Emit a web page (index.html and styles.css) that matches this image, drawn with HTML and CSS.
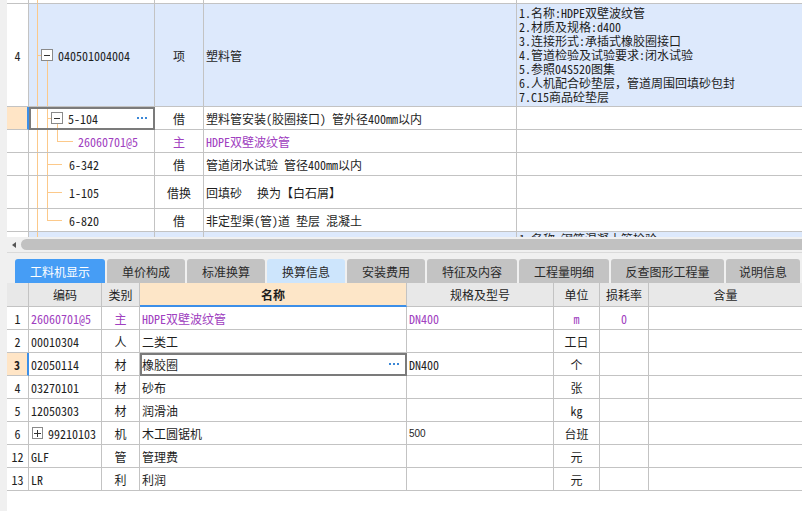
FILE: index.html
```html
<!DOCTYPE html>
<html lang="zh-CN">
<head>
<meta charset="utf-8">
<title>工料机显示</title>
<link rel="stylesheet" href="styles.css">
</head>
<body>
<div class="app">
  <div class="upper">
    <div class="trow h4">
      <div class="num"></div><div class="code tp"></div><div class="type"></div><div class="name"></div><div class="desc"></div>
    </div>
    <div class="trow h103 blue">
      <div class="num">4</div>
      <div class="code t-root"><span class="tbox minus"></span>040501004004</div>
      <div class="type">项</div>
      <div class="name">塑料管</div>
      <div class="desc multi">
        <span>1.名称:HDPE双壁波纹管</span>
        <span>2.材质及规格:d400</span>
        <span>3.连接形式:承插式橡胶圈接口</span>
        <span>4.管道检验及试验要求:闭水试验</span>
        <span>5.参照04S520图集</span>
        <span>6.人机配合砂垫层，管道周围回填砂包封</span>
        <span>7.C15商品砼垫层</span>
      </div>
    </div>
    <div class="trow h23">
      <div class="num cur"></div>
      <div class="code t-sub sel"><span class="tbox minus"></span>5-104<span class="dots"></span></div>
      <div class="type">借</div>
      <div class="name">塑料管安装(胶圈接口) 管外径400mm以内</div>
      <div class="desc"></div>
    </div>
    <div class="trow h23 main">
      <div class="num"></div>
      <div class="code t-leaf2">26060701@5</div>
      <div class="type">主</div>
      <div class="name">HDPE双壁波纹管</div>
      <div class="desc"></div>
    </div>
    <div class="trow h23">
      <div class="num"></div>
      <div class="code t-child">6-342</div>
      <div class="type">借</div>
      <div class="name">管道闭水试验 管径400mm以内</div>
      <div class="desc"></div>
    </div>
    <div class="trow h33">
      <div class="num"></div>
      <div class="code t-child">1-105</div>
      <div class="type">借换</div>
      <div class="name">回填砂<span class="gap"></span>换为【白石屑】</div>
      <div class="desc"></div>
    </div>
    <div class="trow h23">
      <div class="num"></div>
      <div class="code t-last">6-820</div>
      <div class="type">借</div>
      <div class="name">非定型渠(管)道 垫层 混凝土</div>
      <div class="desc"></div>
    </div>
    <div class="trow h30 blue">
      <div class="num"></div>
      <div class="code tp"></div>
      <div class="type"></div>
      <div class="name"></div>
      <div class="desc top"><span>1.名称:钢筋混凝土管检验</span></div>
    </div>
  </div>

  <div class="hscroll">
    <div class="sbar"><span class="sarrow"></span><span class="sthumb"></span></div>
    <div class="sline"></div>
  </div>

  <div class="tabs">
    <div class="tab on w90">工料机显示</div>
    <div class="tab w78">单价构成</div>
    <div class="tab w78">标准换算</div>
    <div class="tab hl w78">换算信息</div>
    <div class="tab w78">安装费用</div>
    <div class="tab w90">特征及内容</div>
    <div class="tab w90">工程量明细</div>
    <div class="tab w113">反查图形工程量</div>
    <div class="tab w74">说明信息</div>
  </div>

  <div class="lower">
    <div class="lrow lhead">
      <div></div><div>编码</div><div>类别</div><div class="active">名称</div><div>规格及型号</div><div>单位</div><div>损耗率</div><div>含量</div>
    </div>
    <div class="lrow main">
      <div class="c">1</div><div>26060701@5</div><div class="c">主</div><div>HDPE双壁波纹管</div><div>DN400</div><div class="c">m</div><div class="c">0</div><div></div>
    </div>
    <div class="lrow">
      <div class="c">2</div><div>00010304</div><div class="c">人</div><div>二类工</div><div></div><div class="c">工日</div><div></div><div></div>
    </div>
    <div class="lrow">
      <div class="c cur">3</div><div>02050114</div><div class="c">材</div><div class="sel">橡胶圈<span class="dots"></span></div><div>DN400</div><div class="c">个</div><div></div><div></div>
    </div>
    <div class="lrow">
      <div class="c">4</div><div>03270101</div><div class="c">材</div><div>砂布</div><div></div><div class="c">张</div><div></div><div></div>
    </div>
    <div class="lrow">
      <div class="c">5</div><div>12050303</div><div class="c">材</div><div>润滑油</div><div></div><div class="c">kg</div><div></div><div></div>
    </div>
    <div class="lrow">
      <div class="c">6</div><div class="boxed"><span class="tbox plus"></span>99210103</div><div class="c">机</div><div>木工圆锯机</div><div class="small">500</div><div class="c">台班</div><div></div><div></div>
    </div>
    <div class="lrow">
      <div class="c">12</div><div>GLF</div><div class="c">管</div><div>管理费</div><div></div><div class="c">元</div><div></div><div></div>
    </div>
    <div class="lrow">
      <div class="c">13</div><div>LR</div><div class="c">利</div><div>利润</div><div></div><div class="c">元</div><div></div><div></div>
    </div>
  </div>
</div>
</body>
</html>
```

FILE: styles.css
```css
* { box-sizing: border-box; }
html, body { margin: 0; padding: 0; }
body {
  width: 802px;
  height: 511px;
  overflow: hidden;
  background: #f0f0f0;
  font-family: "Noto Sans Mono CJK SC", "Noto Sans CJK SC", "Liberation Mono", monospace;
  font-size: 12px;
  color: #1e1e1e;
}
.app {
  display: flex;
  flex-direction: column;
  height: 511px;
  padding-left: 7px;
}

/* ---------- upper grid ---------- */
.upper {
  flex: none;
  height: 237px;
  overflow: hidden;
  background: #fff;
}
.trow {
  display: grid;
  grid-template-columns: 22px 126px 49px 313px 1fr;
}
.trow > div {
  border-right: 1px solid #c3c3c3;
  border-bottom: 1px solid #c3c3c3;
  display: flex;
  align-items: center;
  white-space: nowrap;
  overflow: hidden;
  background-repeat: no-repeat;
}
.trow > div:last-child { border-right: none; }
.h4 { height: 4px; }
.h23 { height: 23px; }
.h33 { height: 33px; }
.h103 { height: 103px; }
.h30 { height: 30px; }
.blue > div { background-color: #dde9fc; }
.blue > div.num { background-color: #fff; }
.num, .type { justify-content: center; }
.name, .desc { padding-left: 2px; }
.desc.multi {
  flex-direction: column;
  align-items: flex-start;
  justify-content: center;
  line-height: 14px;
}
.desc.top { align-items: flex-start; padding-top: 0; line-height: 14px; }
.gap { display: inline-block; width: 15px; }
.main > div { color: #a040c0; }
.main > div.num, .main > .c:first-child { color: #1e1e1e; }

.num.cur {
  background-color: #ffe5c6;
  border-right: 2px solid #3c8fe8;
}
.sel {
  outline: 2px solid #7b7b7b;
  outline-offset: -2px;
}
.dots {
  display: inline-block;
  width: 10px;
  height: 2px;
  margin-left: auto;
  margin-right: 7px;
  background: linear-gradient(90deg, #3b87d6 2px, transparent 2px) 0 0 / 4px 2px repeat-x;
}

/* tree connectors */
.code { --tc: #fcc98a; }
.tp {
  background-image: linear-gradient(var(--tc), var(--tc));
  background-position: 8px 0;
  background-size: 1px 100%;
}
.t-root {
  padding-left: 12px;
  background-image: linear-gradient(var(--tc), var(--tc)), linear-gradient(var(--tc), var(--tc)), linear-gradient(var(--tc), var(--tc));
  background-position: 8px 0, 8px 50%, 18px 100%;
  background-size: 1px 100%, 4px 1px, 1px calc(50% - 6px);
}
.t-sub {
  padding-left: 22px;
  background-image: linear-gradient(var(--tc), var(--tc)), linear-gradient(var(--tc), var(--tc)), linear-gradient(var(--tc), var(--tc)), linear-gradient(var(--tc), var(--tc));
  background-position: 8px 0, 18px 0, 18px 50%, 28px 100%;
  background-size: 1px 100%, 1px 100%, 4px 1px, 1px calc(50% - 6px);
}
.t-leaf2 {
  padding-left: 49px;
  background-image: linear-gradient(var(--tc), var(--tc)), linear-gradient(var(--tc), var(--tc)), linear-gradient(var(--tc), var(--tc)), linear-gradient(var(--tc), var(--tc));
  background-position: 8px 0, 18px 0, 28px 0, 28px 50%;
  background-size: 1px 100%, 1px 100%, 1px 50%, 16px 1px;
}
.t-child {
  padding-left: 40px;
  background-image: linear-gradient(var(--tc), var(--tc)), linear-gradient(var(--tc), var(--tc)), linear-gradient(var(--tc), var(--tc));
  background-position: 8px 0, 18px 0, 18px 50%;
  background-size: 1px 100%, 1px 100%, 15px 1px;
}
.t-last {
  padding-left: 40px;
  background-image: linear-gradient(var(--tc), var(--tc)), linear-gradient(var(--tc), var(--tc)), linear-gradient(var(--tc), var(--tc));
  background-position: 8px 0, 18px 0, 18px 50%;
  background-size: 1px 100%, 1px 50%, 15px 1px;
}
.tbox {
  flex: none;
  width: 12px;
  height: 12px;
  margin-right: 5px;
  border: 1px solid #8a8a8a;
  background-color: #fff;
  background-repeat: no-repeat;
}
.tbox.minus {
  background-image: linear-gradient(#333, #333);
  background-position: center;
  background-size: 6px 1px;
}
.tbox.plus {
  width: 11px;
  height: 12px;
  background-image: linear-gradient(#333, #333), linear-gradient(#333, #333);
  background-position: center, center;
  background-size: 7px 1px, 1px 7px;
}

/* ---------- scrollbar ---------- */
.hscroll {
  flex: none;
  height: 22px;
  display: flex;
  flex-direction: column;
}
.sbar {
  display: flex;
  height: 11px;
  margin-top: 2px;
}
.sarrow {
  width: 14px;
  display: flex;
  align-items: center;
  justify-content: center;
}
.sarrow::before {
  content: "";
  border-style: solid;
  border-width: 3px 4px 3px 0;
  border-color: transparent #555 transparent transparent;
}
.sthumb {
  flex: 1;
  background: #c1c1c1;
  border-radius: 6px 0 0 6px;
}
.sline {
  margin-top: 2px;
  height: 1px;
  background: #dadada;
}

/* ---------- tabs ---------- */
.tabs {
  flex: none;
  display: flex;
  gap: 2px;
  height: 24px;
  padding-left: 8px;
}
.tab {
  background: #c3c3c3;
  border-radius: 3px 3px 0 0;
  display: flex;
  align-items: center;
  justify-content: center;
  font-family: "Noto Sans CJK SC", "Liberation Sans", sans-serif;
  font-size: 12px;
  color: #2a2a2a;
}
.tab.on { background: #469df5; color: #fff; }
.tab.hl { background: #cde5fc; }
.w74 { width: 74px; }
.w78 { width: 78px; }
.w90 { width: 90px; }
.w113 { width: 113px; }

/* ---------- lower grid ---------- */
.lower {
  flex: 1;
  background: #fff;
}
.lrow {
  display: grid;
  grid-template-columns: 22px 73px 38px 267px 147px 46px 49px 1fr;
  height: 23px;
}
.lrow > div {
  border-right: 1px solid #c3c3c3;
  border-bottom: 1px solid #c3c3c3;
  display: flex;
  align-items: center;
  white-space: nowrap;
  overflow: hidden;
  padding-left: 2px;
}
.lrow > div:last-child { border-right: none; }
.lrow > div.c { justify-content: center; padding-left: 0; }
.lrow > div.cur {
  background: #ffe5c6;
  font-weight: bold;
  border-right: 2px solid #3c8fe8;
}
.lrow > div.boxed { padding-left: 3px; }
.lrow > div.small {
  font-family: "Liberation Sans", sans-serif;
  font-size: 10px;
}
.lhead {
  height: 24px;
  background: #e8e8e8;
}
.lhead > div { justify-content: center; padding-left: 0 !important; }
.lhead > div.active {
  background: #fde6c8;
  font-weight: bold;
  border-bottom: 2px solid #3c8fe8;
}
```
